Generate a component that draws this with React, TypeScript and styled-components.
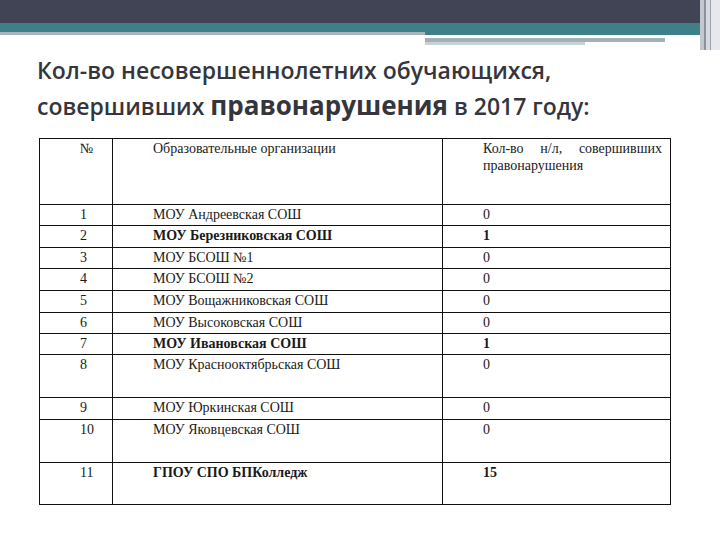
import React from "react";
import styled, { createGlobalStyle } from "styled-components";

const Global = createGlobalStyle`
  html, body { margin: 0; padding: 0; background: #ffffff; }
  body { width: 720px; height: 540px; overflow: hidden; }
`;

const Page = styled.div`
  width: 720px;
  height: 540px;
  background: #ffffff;
  display: flex;
  flex-direction: column;
`;

const Header = styled.div`
  display: flex;
  height: 50px;
`;

const HeaderMain = styled.div`
  flex: 1;
  display: flex;
  flex-direction: column;
`;

const DarkBar = styled.div`
  height: 23px;
  background: #404454;
`;

const Bands = styled.div`
  display: flex;
`;

const LeftBand = styled.div`
  width: 425px;
  display: flex;
  flex-direction: column;
`;

const Teal = styled.div<{ $h: number }>`
  height: ${(p) => p.$h}px;
  background: #3f8088;
`;

const Strip = styled.div<{ $h: number; $w?: number; $c: string }>`
  height: ${(p) => p.$h}px;
  width: ${(p) => (p.$w ? `${p.$w}px` : "100%")};
  background: ${(p) => p.$c};
`;

const RightBand = styled.div`
  flex: 1;
  display: flex;
  flex-direction: column;
`;

const Edge = styled.div`
  width: 20px;
  height: 50px;
  background: repeating-linear-gradient(
    90deg,
    #c4c6d0 0px,
    #c4c6d0 4px,
    #8d92a0 4px,
    #8d92a0 6px,
    #d8dae0 6px,
    #d8dae0 10px,
    #9da2ae 10px,
    #9da2ae 11px,
    #e6e8ec 11px,
    #e6e8ec 20px
  );
`;

const Title = styled.h1`
  margin: 3px 0 0 37px;
  font-family: "Open Sans", "Noto Sans", sans-serif;
  font-weight: 600;
  font-size: 23px;
  line-height: 35px;
  color: #35363d;
  letter-spacing: 0px;
`;

const Big = styled.span`
  font-size: 26px;
  font-weight: 700;
`;

const Table = styled.table`
  margin: 14px 0 0 39px;
  width: 631px;
  border-collapse: collapse;
  table-layout: fixed;
  font-family: "Liberation Serif", "Times New Roman", serif;
  font-size: 14px;
  color: #1a1a1a;
`;

const Row = styled.tr<{ $h: number; $bold?: boolean }>`
  height: ${(p) => p.$h}px;
  font-weight: ${(p) => (p.$bold ? 700 : 400)};
`;

const Cell = styled.td<{ $justify?: boolean }>`
  border: 1.5px solid #111;
  padding: 1px 8px 0 40px;
  vertical-align: top;
  line-height: 17px;
  text-align: ${(p) => (p.$justify ? "justify" : "left")};
  text-align-last: left;
`;

const NumCell = styled(Cell)`
  font-weight: 400;
`;

const Col = styled.col<{ $w: number }>`
  width: ${(p) => p.$w}px;
`;

type Item = { n: string; org: string; v: string; bold?: boolean; h: number };

const items: Item[] = [
  { n: "1", org: "МОУ Андреевская СОШ", v: "0", h: 21 },
  { n: "2", org: "МОУ Березниковская СОШ", v: "1", bold: true, h: 22 },
  { n: "3", org: "МОУ БСОШ №1", v: "0", h: 21 },
  { n: "4", org: "МОУ БСОШ №2", v: "0", h: 22 },
  { n: "5", org: "МОУ Вощажниковская СОШ", v: "0", h: 22 },
  { n: "6", org: "МОУ Высоковская СОШ", v: "0", h: 21 },
  { n: "7", org: "МОУ Ивановская СОШ", v: "1", bold: true, h: 21 },
  { n: "8", org: "МОУ Краснооктябрьская СОШ", v: "0", h: 43 },
  { n: "9", org: "МОУ Юркинская СОШ", v: "0", h: 22 },
  { n: "10", org: "МОУ Яковцевская СОШ", v: "0", h: 43 },
  { n: "11", org: "ГПОУ СПО БПКолледж", v: "15", bold: true, h: 42 },
];

export default function App() {
  return (
    <Page>
      <Global />
      <Header>
        <HeaderMain>
          <DarkBar />
          <Bands>
            <LeftBand>
              <Teal $h={9} />
              <Strip $h={3} $c="#a8b5ba" />
            </LeftBand>
            <RightBand>
              <Teal $h={12} />
              <Strip $h={3} $c="#ffffff" />
              <Strip $h={4} $w={240} $c="#a1b1b6" />
              <Strip $h={3} $w={160} $c="#c9d3d6" />
            </RightBand>
          </Bands>
        </HeaderMain>
        <Edge />
      </Header>
      <Title>
        Кол-во несовершеннолетних обучающихся,
        <br />
        совершивших <Big>правонарушения</Big> в 2017 году:
      </Title>
      <Table>
        <colgroup>
          <Col $w={73} />
          <Col $w={330} />
          <Col $w={228} />
        </colgroup>
        <tbody>
          <Row $h={66}>
            <Cell>№</Cell>
            <Cell>Образовательные организации</Cell>
            <Cell $justify>Кол-во н/л, совершивших правонарушения</Cell>
          </Row>
          {items.map((it) => (
            <Row key={it.n} $h={it.h} $bold={it.bold}>
              <NumCell>{it.n}</NumCell>
              <Cell>{it.org}</Cell>
              <Cell>{it.v}</Cell>
            </Row>
          ))}
        </tbody>
      </Table>
    </Page>
  );
}
